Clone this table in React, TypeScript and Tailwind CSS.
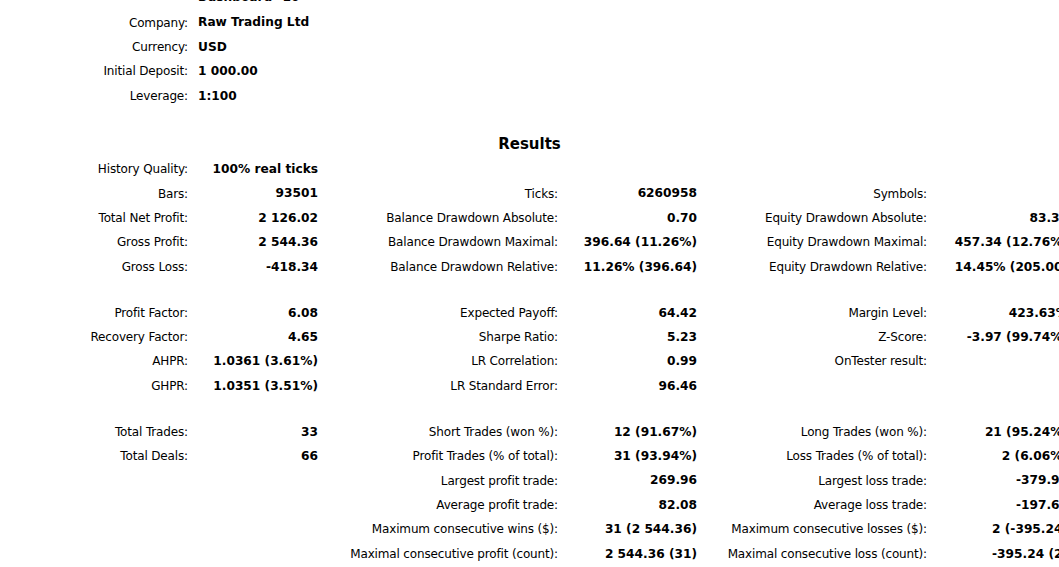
import React from "react";

type Row = [string, string, string?, string?, string?, string?] | null;

const topRows: [string, string][] = [
  ["Company:", "Raw Trading Ltd"],
  ["Currency:", "USD"],
  ["Initial Deposit:", "1 000.00"],
  ["Leverage:", "1:100"],
];

const rows: Row[] = [
  ["History Quality:", "100% real ticks"],
  ["Bars:", "93501", "Ticks:", "6260958", "Symbols:", ""],
  ["Total Net Profit:", "2 126.02", "Balance Drawdown Absolute:", "0.70", "Equity Drawdown Absolute:", "83.32"],
  ["Gross Profit:", "2 544.36", "Balance Drawdown Maximal:", "396.64 (11.26%)", "Equity Drawdown Maximal:", "457.34 (12.76%)"],
  ["Gross Loss:", "-418.34", "Balance Drawdown Relative:", "11.26% (396.64)", "Equity Drawdown Relative:", "14.45% (205.00)"],
  null,
  ["Profit Factor:", "6.08", "Expected Payoff:", "64.42", "Margin Level:", "423.63%"],
  ["Recovery Factor:", "4.65", "Sharpe Ratio:", "5.23", "Z-Score:", "-3.97 (99.74%)"],
  ["AHPR:", "1.0361 (3.61%)", "LR Correlation:", "0.99", "OnTester result:", ""],
  ["GHPR:", "1.0351 (3.51%)", "LR Standard Error:", "96.46", "", ""],
  null,
  ["Total Trades:", "33", "Short Trades (won %):", "12 (91.67%)", "Long Trades (won %):", "21 (95.24%)"],
  ["Total Deals:", "66", "Profit Trades (% of total):", "31 (93.94%)", "Loss Trades (% of total):", "2 (6.06%)"],
  ["", "", "Largest profit trade:", "269.96", "Largest loss trade:", "-379.92"],
  ["", "", "Average profit trade:", "82.08", "Average loss trade:", "-197.62"],
  ["", "", "Maximum consecutive wins ($):", "31 (2 544.36)", "Maximum consecutive losses ($):", "2 (-395.24)"],
  ["", "", "Maximal consecutive profit (count):", "2 544.36 (31)", "Maximal consecutive loss (count):", "-395.24 (2)"],
];

const label = "h-[24.4px] flex items-center justify-end whitespace-nowrap text-[12px] tracking-[-0.15px] text-black";
const value = "h-[24.4px] flex items-center justify-end whitespace-nowrap text-[12.2px] font-bold text-black";

export default function App() {
  return (
    <div
      className="w-[1059px] h-[567px] overflow-hidden bg-white"
      style={{ fontFamily: '"DejaVu Sans", Verdana, sans-serif' }}
    >
      <div className="w-[1090px] -mt-[14px]">
        <div className="grid grid-cols-[188px_871px]">
          <div className="h-[24.4px]" />
          <div className="h-[24.4px] flex items-center pl-[10px] pb-[2px] whitespace-nowrap text-[12.2px] font-bold text-black">
            Dashboard=10
          </div>
          {topRows.map(([l, v], i) => (
            <React.Fragment key={i}>
              <div className={label}>{l}</div>
              <div className="h-[24.4px] flex items-center pl-[10px] whitespace-nowrap text-[12.2px] font-bold text-black">
                {v}
              </div>
            </React.Fragment>
          ))}
        </div>
        <div className="h-[24.6px]" />
        <div className="h-[24.4px] flex items-center justify-center w-[1059px] text-[15px] font-bold text-black">
          Results
        </div>
        <div className="grid grid-cols-[188px_130px_240px_139px_230px_141px]">
          {rows.map((r, i) =>
            r === null ? (
              <div key={i} className="col-span-6 h-[21.6px]" />
            ) : (
              <React.Fragment key={i}>
                <div className={label}>{r[0]}</div>
                <div className={value}>{r[1]}</div>
                <div className={label}>{r[2] ?? ""}</div>
                <div className={value}>{r[3] ?? ""}</div>
                <div className={label}>{r[4] ?? ""}</div>
                <div className={value}>{r[5] ?? ""}</div>
              </React.Fragment>
            )
          )}
        </div>
      </div>
    </div>
  );
}
